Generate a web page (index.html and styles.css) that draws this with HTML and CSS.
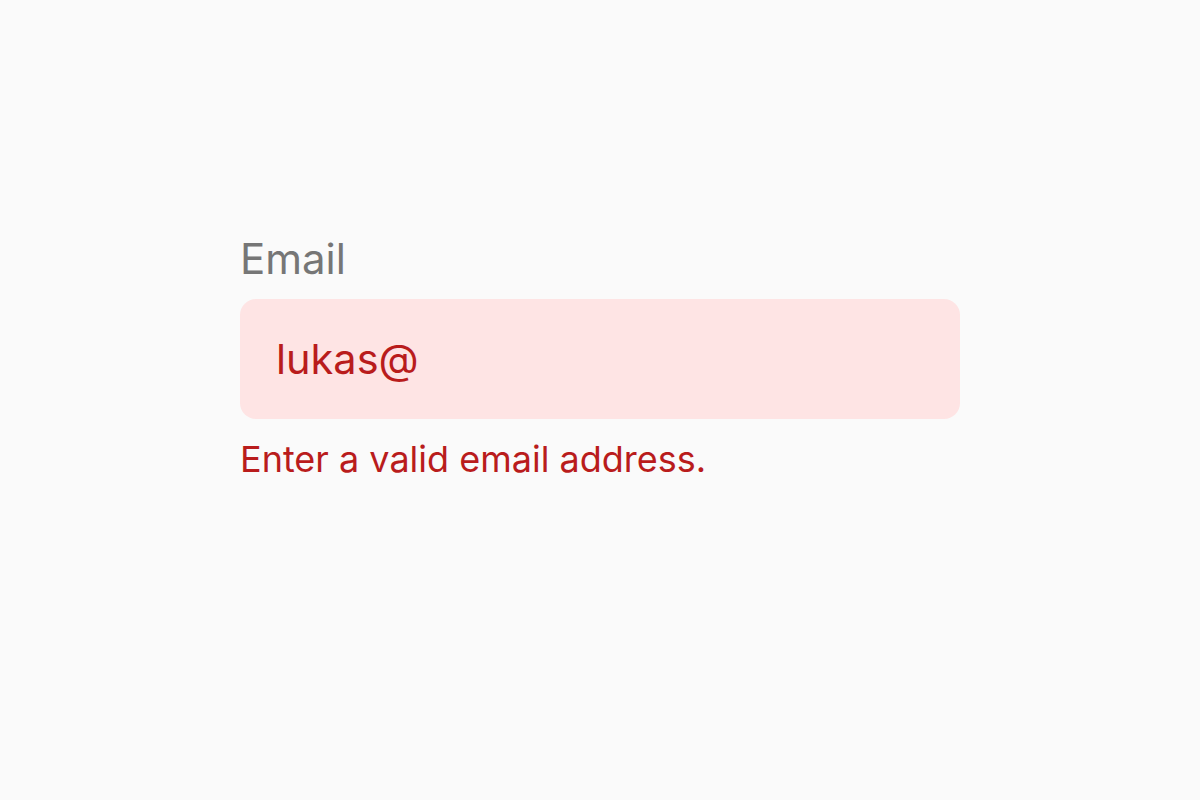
FILE: index.html
```html
<!DOCTYPE html>
<html lang="en">

<head>
    <meta charset="UTF-8"/>
    <title>Email</title>
    <link rel="stylesheet" href="styles.css">
</head>

<body>
<form class="field" action="">
    <label class="label" for="email">Email</label>
    <input type="text" id="email" class="input" name="email" value="lukas@"/>
    <p class="error">Enter a valid email address.</p>
</form>
</body>

</html>
```

FILE: styles.css
```css
* {
    margin: 0;
    padding: 0;
    box-sizing: border-box;
}

body {
    background: #fafafa;
    font-family: Inter, "Noto Sans", sans-serif;
}

.field {
    width: 720px;
    margin: 0 auto;
    padding-top: 235px;
    display: flex;
    flex-direction: column;
}

.label {
    font-size: 42px;
    line-height: 48px;
    color: #767676;
}

.input {
    margin-top: 16px;
    height: 120px;
    padding: 0 36px;
    border: 0;
    outline: none;
    border-radius: 16px;
    background: #fee4e4;
    font-family: inherit;
    font-size: 41.5px;
    line-height: 48px;
    color: #b91c1c;
}

.error {
    margin-top: 18px;
    font-size: 36px;
    line-height: 44px;
    color: #b91c1c;
}
```
